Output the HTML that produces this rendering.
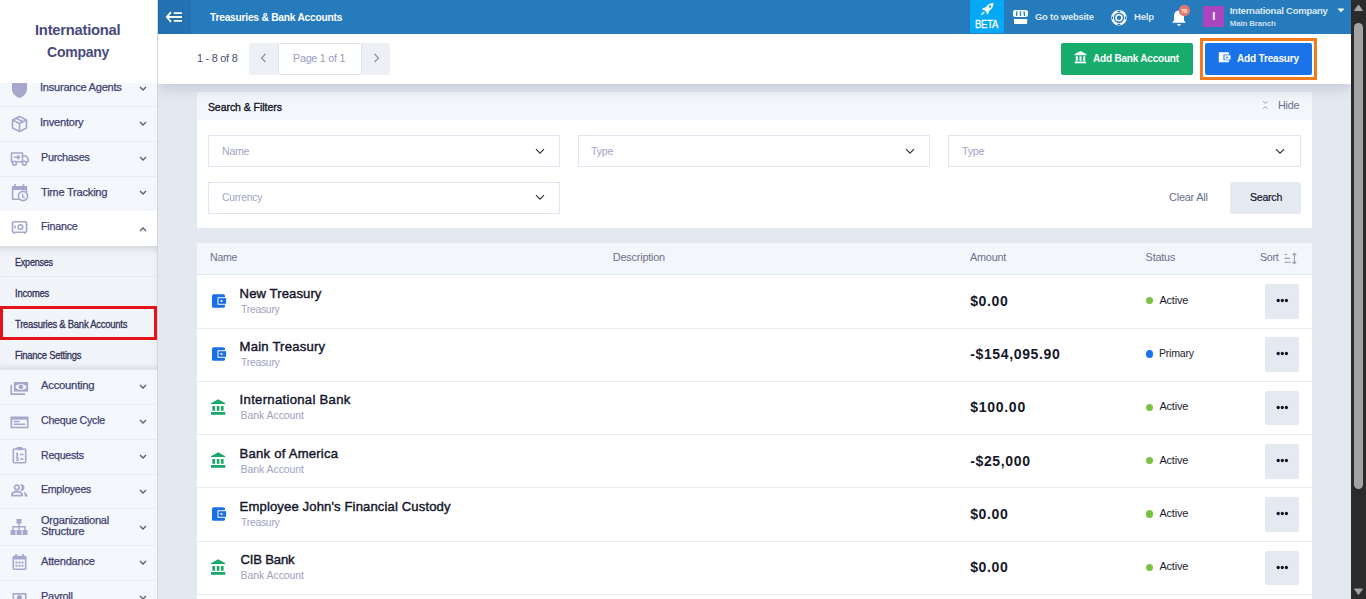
<!DOCTYPE html>
<html><head><meta charset="utf-8"><title>Treasuries &amp; Bank Accounts</title>
<style>
*{box-sizing:border-box;margin:0;padding:0}
html,body{width:1366px;height:599px;overflow:hidden;background:#e4e9f1;font-family:"Liberation Sans",sans-serif;position:relative}
.a{position:absolute}
.tx{position:absolute;white-space:pre;line-height:normal;z-index:5}
svg{position:absolute;overflow:visible}

</style></head><body>
<!-- ===== SIDEBAR ===== -->
<div class="a" style="left:0;top:0;width:157px;height:599px;background:#f4f7fb"></div>
<div class="a" style="left:157px;top:0;width:1px;height:599px;background:#d6d7db;z-index:3"></div>
<div class="a" style="left:0;top:106px;width:157px;height:1px;background:#e9ecf1"></div>
<div class="a" style="left:0;top:141px;width:157px;height:1px;background:#e9ecf1"></div>
<div class="a" style="left:0;top:176px;width:157px;height:1px;background:#e9ecf1"></div>
<div class="a" style="left:0;top:211px;width:157px;height:35px;background:#fff"></div>
<div class="a" style="left:0;top:246px;width:157px;height:123px;background:#f1f4f8;box-shadow:inset 0 9px 9px -7px rgba(0,0,20,.16), inset -5px 0 6px -5px rgba(0,0,20,.07), inset 0 -7px 7px -6px rgba(0,0,20,.12)"></div>
<div class="a" style="left:0;top:276px;width:157px;height:1px;background:#e6e9ef"></div>
<div class="a" style="left:0;top:369px;width:157px;height:1px;background:#e3e6ec"></div>
<div class="a" style="left:0;top:404px;width:157px;height:1px;background:#e9ecf1"></div>
<div class="a" style="left:0;top:439px;width:157px;height:1px;background:#e9ecf1"></div>
<div class="a" style="left:0;top:474px;width:157px;height:1px;background:#e9ecf1"></div>
<div class="a" style="left:0;top:508px;width:157px;height:1px;background:#e9ecf1"></div>
<div class="a" style="left:0;top:545px;width:157px;height:1px;background:#e9ecf1"></div>
<div class="a" style="left:0;top:580px;width:157px;height:1px;background:#e9ecf1"></div>
<!-- red highlight -->
<div class="a" style="left:0;top:306px;width:157px;height:34px;border:3px solid #e3121b;z-index:4"></div>

<!-- sidebar chevrons -->
<svg style="left:139px;top:86px" width="8" height="5" viewBox="0 0 8 5"><path d="M1 1 L4 4 L7 1" fill="none" stroke="#5b5c68" stroke-width="1.25"/></svg>
<svg style="left:139px;top:121px" width="8" height="5" viewBox="0 0 8 5"><path d="M1 1 L4 4 L7 1" fill="none" stroke="#5b5c68" stroke-width="1.25"/></svg>
<svg style="left:139px;top:156px" width="8" height="5" viewBox="0 0 8 5"><path d="M1 1 L4 4 L7 1" fill="none" stroke="#5b5c68" stroke-width="1.25"/></svg>
<svg style="left:139px;top:190px" width="8" height="5" viewBox="0 0 8 5"><path d="M1 1 L4 4 L7 1" fill="none" stroke="#5b5c68" stroke-width="1.25"/></svg>
<svg style="left:139px;top:227px" width="8" height="5" viewBox="0 0 8 5"><path d="M1 4 L4 1 L7 4" fill="none" stroke="#5b5c68" stroke-width="1.25"/></svg>
<svg style="left:139px;top:384px" width="8" height="5" viewBox="0 0 8 5"><path d="M1 1 L4 4 L7 1" fill="none" stroke="#5b5c68" stroke-width="1.25"/></svg>
<svg style="left:139px;top:419px" width="8" height="5" viewBox="0 0 8 5"><path d="M1 1 L4 4 L7 1" fill="none" stroke="#5b5c68" stroke-width="1.25"/></svg>
<svg style="left:139px;top:454px" width="8" height="5" viewBox="0 0 8 5"><path d="M1 1 L4 4 L7 1" fill="none" stroke="#5b5c68" stroke-width="1.25"/></svg>
<svg style="left:139px;top:489px" width="8" height="5" viewBox="0 0 8 5"><path d="M1 1 L4 4 L7 1" fill="none" stroke="#5b5c68" stroke-width="1.25"/></svg>
<svg style="left:139px;top:525px" width="8" height="5" viewBox="0 0 8 5"><path d="M1 1 L4 4 L7 1" fill="none" stroke="#5b5c68" stroke-width="1.25"/></svg>
<svg style="left:139px;top:560px" width="8" height="5" viewBox="0 0 8 5"><path d="M1 1 L4 4 L7 1" fill="none" stroke="#5b5c68" stroke-width="1.25"/></svg>
<svg style="left:139px;top:595px" width="8" height="5" viewBox="0 0 8 5"><path d="M1 1 L4 4 L7 1" fill="none" stroke="#5b5c68" stroke-width="1.25"/></svg>

<!-- sidebar icons -->
<!-- shield -->
<svg style="left:11px;top:76px" width="17" height="23" viewBox="0 0 17 23"><path d="M1 0 H16 V13 C16 18 12 20.5 8.5 22 C5 20.5 1 18 1 13 Z" fill="#a5a7cc"/></svg>
<!-- cube -->
<svg style="left:11px;top:115px" width="17" height="18" viewBox="0 0 17 18"><g fill="none" stroke="#a5a7cc" stroke-width="1.6" stroke-linejoin="round"><path d="M8.5 1.5 L15.5 5 V13 L8.5 16.5 L1.5 13 V5 Z"/><path d="M1.5 5 L8.5 8.5 L15.5 5 M8.5 8.5 V16.5"/><path d="M5 3.3 L12 6.8"/></g></svg>
<!-- truck -->
<svg style="left:10px;top:151px" width="20" height="16" viewBox="0 0 20 16"><g fill="none" stroke="#a5a7cc" stroke-width="1.6" stroke-linejoin="round"><path d="M1.5 2 H12.5 V10.8 H1.5 Z"/><path d="M12.5 5 H16 L18 7.5 V10.8 H12.5"/><circle cx="4.5" cy="12.2" r="1.9" fill="#f4f7fb"/><circle cx="14.3" cy="12.2" r="1.9" fill="#f4f7fb"/><path d="M4 6.3 H9.5 M7.5 4.3 L9.5 6.3 L7.5 8.3"/></g></svg>
<!-- calendar clock -->
<svg style="left:10px;top:183px" width="20" height="19" viewBox="0 0 20 19"><g fill="none" stroke="#a5a7cc" stroke-width="1.6"><path d="M2.6 3.8 H16.4 V9 M2.6 3.8 V16.2 H9"/><path d="M5 1 V4 M13.5 1 V4"/></g><rect x="2" y="3" width="15" height="4" fill="#a5a7cc"/><circle cx="13" cy="13" r="4.6" fill="#f4f7fb" stroke="#a5a7cc" stroke-width="1.7"/><path d="M12.6 10.8 V13.4 L14.6 15" fill="none" stroke="#a5a7cc" stroke-width="1.4"/></svg>
<!-- safe -->
<svg style="left:10px;top:220px" width="19" height="15" viewBox="0 0 19 15"><g fill="none" stroke="#a5a7cc" stroke-width="1.6"><rect x="2.5" y="1.8" width="14" height="10.5" rx="1"/><circle cx="10.5" cy="7" r="2.3"/><path d="M5 5.5 V8.5 M4 12.5 V14 M15 12.5 V14 M17 4.5 V5.5 M17 8.5 V9.5"/></g></svg>
<!-- accounting -->
<svg style="left:9px;top:381px" width="21" height="15" viewBox="0 0 21 15"><g fill="#a5a7cc"><path d="M1.4 3.8 H3 V12.3 H16.1 V13.9 H1.4 Z"/><rect x="4.9" y="1" width="14.2" height="9.6"/></g><ellipse cx="11.9" cy="6" rx="5.4" ry="3" fill="#f4f7fb"/><circle cx="11.9" cy="5.9" r="2.3" fill="#a5a7cc"/></svg>
<!-- cheque -->
<svg style="left:9px;top:414.7px" width="21" height="15" viewBox="0 0 21 15"><rect x="2.3" y="2.3" width="16.4" height="10.2" fill="none" stroke="#a5a7cc" stroke-width="1.6"/><rect x="2" y="2" width="17" height="2.6" fill="#a5a7cc"/><path d="M5.3 6.6 H10 M5.3 9.2 H15.8" stroke="#a5a7cc" stroke-width="1.5" stroke-linecap="round"/></svg>
<!-- clipboard -->
<svg style="left:11px;top:446px" width="17" height="18" viewBox="0 0 17 18"><rect x="2.3" y="3" width="12.4" height="13.8" rx="1" fill="none" stroke="#a5a7cc" stroke-width="1.6"/><rect x="5.5" y="1" width="6" height="3.2" rx="1" fill="#a5a7cc"/><path d="M5 7.5 H6.5 V10 M5 10 H7 M5 12 H7 V14.3 H5 M9 8.5 H12.5 M9 13 H12.5" fill="none" stroke="#a5a7cc" stroke-width="1.3"/></svg>
<!-- employees -->
<svg style="left:10px;top:483px" width="19" height="15" viewBox="0 0 19 15"><circle cx="6.8" cy="4.4" r="2.3" fill="none" stroke="#a5a7cc" stroke-width="1.7"/><path d="M1.8 12.6 C1.8 9.6 4.3 8.6 6.8 8.6 C9.3 8.6 12.3 9.6 12.3 12.6 Z" fill="none" stroke="#a5a7cc" stroke-width="1.7" stroke-linejoin="round"/><path d="M11.2 1.9 A2.6 2.6 0 0 1 11.2 7.1 A4 4 0 0 0 11.2 1.9 Z" fill="#a5a7cc" stroke="#a5a7cc" stroke-width="1.2"/><path d="M13.6 8.9 C16 9.4 17.6 10.6 17.6 13.4 H14.8 C14.8 11.4 14.4 10 13.6 8.9 Z" fill="#a5a7cc"/></svg>
<!-- org -->
<svg style="left:9px;top:518px" width="21" height="18" viewBox="0 0 21 18"><g fill="#a5a7cc"><rect x="7.5" y="1" width="5" height="4.5"/><rect x="1.5" y="12" width="5" height="5"/><rect x="7.5" y="12" width="5" height="5"/><rect x="13.5" y="12" width="5" height="5"/><path d="M9.3 5 H10.7 V8 H16.7 V12 H15.3 V9.4 H10.7 V12 H9.3 V9.4 H4.7 V12 H3.3 V8 H9.3 Z"/></g></svg>
<!-- attendance -->
<svg style="left:11px;top:553px" width="17" height="18" viewBox="0 0 17 18"><rect x="2.3" y="3.5" width="12.4" height="12.8" rx="1" fill="none" stroke="#a5a7cc" stroke-width="1.6"/><rect x="2" y="3" width="13" height="3.5" fill="#a5a7cc"/><path d="M5 1 V4 M12 1 V4" stroke="#a5a7cc" stroke-width="1.6"/><g fill="#a5a7cc"><rect x="4.5" y="8.5" width="2" height="2"/><rect x="7.5" y="8.5" width="2" height="2"/><rect x="10.5" y="8.5" width="2" height="2"/><rect x="4.5" y="11.8" width="2" height="2"/><rect x="7.5" y="11.8" width="2" height="2"/><rect x="10.5" y="11.8" width="2" height="2"/></g></svg>
<!-- payroll -->
<svg style="left:11px;top:592px" width="17" height="10" viewBox="0 0 17 10"><rect x="2.3" y="1.8" width="12.4" height="9" fill="none" stroke="#a5a7cc" stroke-width="1.6"/><circle cx="8.5" cy="5.5" r="2.6" fill="#a5a7cc"/></svg>

<!-- ===== TOP BAR ===== -->
<div class="a" style="left:158px;top:0;width:1193px;height:34px;background:#257bbc"></div>
<div class="a" style="left:158px;top:0;width:33px;height:34px;background:#2371b1"></div>
<svg style="left:165px;top:11px" width="18" height="12" viewBox="0 0 18 12"><g fill="none" stroke="#fff" stroke-width="1.8"><path d="M6 1.2 L1.8 6 L6 10.8"/><path d="M2 6 H17 M8.8 2.2 H17 M8.8 9.8 H17"/></g></svg>
<div class="a" style="left:970px;top:0;width:34px;height:33px;background:#03a9f4"></div>
<!-- rocket -->
<svg style="left:980px;top:2px" width="15" height="14" viewBox="0 0 15 14"><g fill="#fff"><path d="M13.5 1 C10 1 7.5 2.5 5.5 5.5 L3.5 5.8 L1.8 7.6 L4.3 8 L6.5 10.2 L6.9 12.7 L8.7 11 L9 9 C12 7 13.5 4.5 13.5 1 Z"/><circle cx="10" cy="4.5" r="1.2" fill="#03a9f4"/><path d="M3.3 9.3 L1.2 11.8 L1 13 L2.3 12.9 L5 10.8 Z" opacity=".75"/></g></svg>
<!-- store -->
<svg style="left:1012px;top:9px" width="17" height="16" viewBox="0 0 17 16"><rect x="1" y="1" width="15" height="7" rx="2.2" fill="#fff"/><path d="M5 2.2 L4.5 7 M8.5 2.2 V7 M12 2.2 L12.5 7" stroke="#257bbc" stroke-width="1.3"/><rect x="2" y="10" width="13.2" height="5" fill="#fff"/></svg>
<!-- help ring -->
<svg style="left:1110px;top:9px" width="18" height="18" viewBox="0 0 18 18"><circle cx="9" cy="8.8" r="6.5" fill="none" stroke="#fff" stroke-width="2.6"/><circle cx="9" cy="8.8" r="3" fill="none" stroke="#fff" stroke-width="1.6"/><g stroke="#257bbc" stroke-width="1.3"><path d="M7.6 2.3 H10.4 M7.6 15.3 H10.4 M2.5 7.4 V10.2 M15.5 7.4 V10.2"/></g></svg>
<!-- bell -->
<svg style="left:1170px;top:9px" width="18" height="18" viewBox="0 0 18 18"><path d="M9 1.5 C5.5 1.5 4 4 4 7.5 V11.5 L2 13.8 H16 L14 11.5 V7.5 C14 4 12.5 1.5 9 1.5 Z" fill="#fff"/><path d="M7.2 15 H10.8 C10.6 16.2 9.9 16.8 9 16.8 C8.1 16.8 7.4 16.2 7.2 15 Z" fill="#fff"/></svg>
<svg style="left:1178px;top:4px" width="13" height="13" viewBox="0 0 13 13"><circle cx="6.4" cy="6.5" r="5.7" fill="#df7674"/></svg>
<div class="a" style="left:1203px;top:6px;width:21px;height:21px;background:#ab45bd"></div>
<svg style="left:1337px;top:8px" width="8" height="5" viewBox="0 0 8 5"><path d="M0.5 0.5 H7.5 L4 4.3 Z" fill="#fff"/></svg>

<!-- ===== TOOLBAR ===== -->
<div class="a" style="left:158px;top:34px;width:1193px;height:50px;background:#fff;box-shadow:0 5px 14px rgba(40,50,90,.17);clip-path:inset(0 0 -40px 0);z-index:1"></div>
<div class="a" style="left:249px;top:43px;width:141px;height:32px;background:#edf0f5;border-radius:3px;z-index:2"></div>
<div class="a" style="left:278px;top:43px;width:84px;height:32px;background:#fff;border:1px solid #e1e5ee;z-index:2"></div>
<svg style="left:259px;top:53px;z-index:2" width="9" height="10" viewBox="0 0 9 10"><path d="M6.5 1 L2.5 5 L6.5 9" fill="none" stroke="#8f92a8" stroke-width="1.3"/></svg>
<svg style="left:372px;top:53px;z-index:2" width="9" height="10" viewBox="0 0 9 10"><path d="M2.5 1 L6.5 5 L2.5 9" fill="none" stroke="#8f92a8" stroke-width="1.3"/></svg>
<div class="a" style="left:1061px;top:43px;width:132px;height:32px;background:#17ac6c;border-radius:2px;z-index:2"></div>
<svg style="left:1074px;top:50px;z-index:2" width="13" height="14" viewBox="0 0 13 14"><g fill="#fff"><path d="M6.5 1 L12.5 4.2 V5.3 H0.5 V4.2 Z"/><rect x="1.8" y="6.3" width="2" height="4.5"/><rect x="5.5" y="6.3" width="2" height="4.5"/><rect x="9.2" y="6.3" width="2" height="4.5"/><rect x="0.8" y="11.5" width="11.4" height="1.8"/></g></svg>
<div class="a" style="left:1200px;top:38px;width:117px;height:42px;border:3px solid #f47a1f;z-index:2"></div>
<div class="a" style="left:1205px;top:43px;width:107px;height:32px;background:#1a73e8;border-radius:2px;z-index:2"></div>
<svg style="left:1218px;top:52px;z-index:2" width="13" height="11" viewBox="0 0 13 11"><path d="M1.2 0.3 H10.5 Q11 0.3 11 0.8 V2.5 H5.5 V8.3 H11 V9.7 Q11 10.2 10.5 10.2 H1.2 Q0.8 10.2 0.8 9.7 V0.8 Q0.8 0.3 1.2 0.3 Z" fill="#fff"/><rect x="6.5" y="3.3" width="6" height="4.3" fill="#fff"/><circle cx="9" cy="5.45" r="0.9" fill="#1a73e8"/></svg>

<!-- ===== FILTER PANEL ===== -->
<div class="a" style="left:197px;top:92px;width:1115px;height:136px;background:#fff"></div>
<div class="a" style="left:197px;top:92px;width:1115px;height:28px;background:#f3f6fa"></div>
<svg style="left:1261px;top:100px" width="9" height="10" viewBox="0 0 9 10"><path d="M2.2 1.2 L4.4 3.5 L6.6 1.2 M2.2 8.8 L4.4 6.5 L6.6 8.8" fill="none" stroke="#9c9eba" stroke-width="1"/></svg>
<div class="a" style="left:208px;top:135px;width:352px;height:32px;border:1px solid #e0e6ef"></div>
<div class="a" style="left:578px;top:135px;width:352px;height:32px;border:1px solid #e0e6ef"></div>
<div class="a" style="left:948px;top:135px;width:353px;height:32px;border:1px solid #e0e6ef"></div>
<div class="a" style="left:208px;top:182px;width:352px;height:32px;border:1px solid #e0e6ef"></div>
<svg style="left:535px;top:148px" width="10" height="7" viewBox="0 0 10 7"><path d="M1 1.2 L5 5.2 L9 1.2" fill="none" stroke="#2f3140" stroke-width="1.15"/></svg>
<svg style="left:905px;top:148px" width="10" height="7" viewBox="0 0 10 7"><path d="M1 1.2 L5 5.2 L9 1.2" fill="none" stroke="#2f3140" stroke-width="1.15"/></svg>
<svg style="left:1275px;top:148px" width="10" height="7" viewBox="0 0 10 7"><path d="M1 1.2 L5 5.2 L9 1.2" fill="none" stroke="#2f3140" stroke-width="1.15"/></svg>
<svg style="left:535px;top:194px" width="10" height="7" viewBox="0 0 10 7"><path d="M1 1.2 L5 5.2 L9 1.2" fill="none" stroke="#2f3140" stroke-width="1.15"/></svg>
<div class="a" style="left:1230px;top:182px;width:71px;height:32px;background:#e4e9f2;border-radius:2px"></div>

<!-- ===== TABLE ===== -->
<div class="a" style="left:197px;top:243px;width:1115px;height:356px;background:#fff"></div>
<div class="a" style="left:197px;top:243px;width:1115px;height:31px;background:#f3f6fa"></div>
<div class="a" style="left:197px;top:274px;width:1115px;height:1px;background:#e2e7ef"></div>
<div class="a" style="left:197px;top:328px;width:1115px;height:1px;background:#e6ebf2"></div>
<div class="a" style="left:197px;top:381px;width:1115px;height:1px;background:#e6ebf2"></div>
<div class="a" style="left:197px;top:434px;width:1115px;height:1px;background:#e6ebf2"></div>
<div class="a" style="left:197px;top:487px;width:1115px;height:1px;background:#e6ebf2"></div>
<div class="a" style="left:197px;top:541px;width:1115px;height:1px;background:#e6ebf2"></div>
<div class="a" style="left:197px;top:594px;width:1115px;height:1px;background:#e6ebf2"></div>
<svg style="left:1284px;top:252px" width="13" height="13" viewBox="0 0 13 13"><g fill="none" stroke="#9a9cb5" stroke-width="1.1"><path d="M0.5 2.5 H3.2 M0.5 6.4 H6 M0.5 10.3 H6.8"/><path d="M10.4 1.5 V11.5 M8.6 3.2 L10.4 1.4 L12.2 3.2 M8.6 9.8 L10.4 11.6 L12.2 9.8"/></g></svg>
<svg style="left:211px;top:294.00px" width="16" height="15" viewBox="0 0 16 15"><path d="M2.6 0.2 H12.4 Q14 0.2 14 1.8 V3.2 H6.5 V10.8 H14 V12.2 Q14 13.8 12.4 13.8 H2.6 Q1 13.8 1 12.2 V1.8 Q1 0.2 2.6 0.2 Z" fill="#1a6fe8"/><rect x="7.5" y="4.2" width="7.6" height="5.6" fill="#1a6fe8"/><circle cx="10.5" cy="7" r="1.1" fill="#fff"/></svg>
<div class="a" style="left:1146px;top:297.00px;width:7.2px;height:7.2px;border-radius:50%;background:#7bc142"></div>
<div class="a" style="left:1265px;top:284.00px;width:34px;height:34.6px;background:#e4e9f2;border-radius:2px"></div>
<svg style="left:1276px;top:298.00px" width="13" height="5" viewBox="0 0 13 5"><g fill="#15162a"><circle cx="2.2" cy="2.5" r="1.65"/><circle cx="6.3" cy="2.5" r="1.65"/><circle cx="10.4" cy="2.5" r="1.65"/></g></svg>
<svg style="left:211px;top:347.33px" width="16" height="15" viewBox="0 0 16 15"><path d="M2.6 0.2 H12.4 Q14 0.2 14 1.8 V3.2 H6.5 V10.8 H14 V12.2 Q14 13.8 12.4 13.8 H2.6 Q1 13.8 1 12.2 V1.8 Q1 0.2 2.6 0.2 Z" fill="#1a6fe8"/><rect x="7.5" y="4.2" width="7.6" height="5.6" fill="#1a6fe8"/><circle cx="10.5" cy="7" r="1.1" fill="#fff"/></svg>
<div class="a" style="left:1146px;top:350.33px;width:7.2px;height:7.2px;border-radius:50%;background:#1a73e8"></div>
<div class="a" style="left:1265px;top:337.33px;width:34px;height:34.6px;background:#e4e9f2;border-radius:2px"></div>
<svg style="left:1276px;top:351.33px" width="13" height="5" viewBox="0 0 13 5"><g fill="#15162a"><circle cx="2.2" cy="2.5" r="1.65"/><circle cx="6.3" cy="2.5" r="1.65"/><circle cx="10.4" cy="2.5" r="1.65"/></g></svg>
<svg style="left:210px;top:398.96px" width="16" height="17" viewBox="0 0 16 17"><g fill="#19aa6a"><path d="M8.2 0.2 L15.3 4.2 V5 H1 V4.2 Z"/><rect x="2.4" y="7" width="2.6" height="4.8"/><rect x="6.8" y="7" width="2.6" height="4.8"/><rect x="11" y="7" width="2.6" height="4.8"/><rect x="1" y="13" width="14.3" height="2.8"/></g></svg>
<div class="a" style="left:1146px;top:403.66px;width:7.2px;height:7.2px;border-radius:50%;background:#7bc142"></div>
<div class="a" style="left:1265px;top:390.66px;width:34px;height:34.6px;background:#e4e9f2;border-radius:2px"></div>
<svg style="left:1276px;top:404.66px" width="13" height="5" viewBox="0 0 13 5"><g fill="#15162a"><circle cx="2.2" cy="2.5" r="1.65"/><circle cx="6.3" cy="2.5" r="1.65"/><circle cx="10.4" cy="2.5" r="1.65"/></g></svg>
<svg style="left:210px;top:452.29px" width="16" height="17" viewBox="0 0 16 17"><g fill="#19aa6a"><path d="M8.2 0.2 L15.3 4.2 V5 H1 V4.2 Z"/><rect x="2.4" y="7" width="2.6" height="4.8"/><rect x="6.8" y="7" width="2.6" height="4.8"/><rect x="11" y="7" width="2.6" height="4.8"/><rect x="1" y="13" width="14.3" height="2.8"/></g></svg>
<div class="a" style="left:1146px;top:456.99px;width:7.2px;height:7.2px;border-radius:50%;background:#7bc142"></div>
<div class="a" style="left:1265px;top:443.99px;width:34px;height:34.6px;background:#e4e9f2;border-radius:2px"></div>
<svg style="left:1276px;top:457.99px" width="13" height="5" viewBox="0 0 13 5"><g fill="#15162a"><circle cx="2.2" cy="2.5" r="1.65"/><circle cx="6.3" cy="2.5" r="1.65"/><circle cx="10.4" cy="2.5" r="1.65"/></g></svg>
<svg style="left:211px;top:507.32px" width="16" height="15" viewBox="0 0 16 15"><path d="M2.6 0.2 H12.4 Q14 0.2 14 1.8 V3.2 H6.5 V10.8 H14 V12.2 Q14 13.8 12.4 13.8 H2.6 Q1 13.8 1 12.2 V1.8 Q1 0.2 2.6 0.2 Z" fill="#1a6fe8"/><rect x="7.5" y="4.2" width="7.6" height="5.6" fill="#1a6fe8"/><circle cx="10.5" cy="7" r="1.1" fill="#fff"/></svg>
<div class="a" style="left:1146px;top:510.32px;width:7.2px;height:7.2px;border-radius:50%;background:#7bc142"></div>
<div class="a" style="left:1265px;top:497.32px;width:34px;height:34.6px;background:#e4e9f2;border-radius:2px"></div>
<svg style="left:1276px;top:511.32px" width="13" height="5" viewBox="0 0 13 5"><g fill="#15162a"><circle cx="2.2" cy="2.5" r="1.65"/><circle cx="6.3" cy="2.5" r="1.65"/><circle cx="10.4" cy="2.5" r="1.65"/></g></svg>
<svg style="left:210px;top:558.95px" width="16" height="17" viewBox="0 0 16 17"><g fill="#19aa6a"><path d="M8.2 0.2 L15.3 4.2 V5 H1 V4.2 Z"/><rect x="2.4" y="7" width="2.6" height="4.8"/><rect x="6.8" y="7" width="2.6" height="4.8"/><rect x="11" y="7" width="2.6" height="4.8"/><rect x="1" y="13" width="14.3" height="2.8"/></g></svg>
<div class="a" style="left:1146px;top:563.65px;width:7.2px;height:7.2px;border-radius:50%;background:#7bc142"></div>
<div class="a" style="left:1265px;top:550.65px;width:34px;height:34.6px;background:#e4e9f2;border-radius:2px"></div>
<svg style="left:1276px;top:564.65px" width="13" height="5" viewBox="0 0 13 5"><g fill="#15162a"><circle cx="2.2" cy="2.5" r="1.65"/><circle cx="6.3" cy="2.5" r="1.65"/><circle cx="10.4" cy="2.5" r="1.65"/></g></svg>
<svg style="left:210px;top:612.28px" width="16" height="17" viewBox="0 0 16 17"><g fill="#19aa6a"><path d="M8.2 0.2 L15.3 4.2 V5 H1 V4.2 Z"/><rect x="2.4" y="7" width="2.6" height="4.8"/><rect x="6.8" y="7" width="2.6" height="4.8"/><rect x="11" y="7" width="2.6" height="4.8"/><rect x="1" y="13" width="14.3" height="2.8"/></g></svg>
<div class="a" style="left:1146px;top:616.98px;width:7.2px;height:7.2px;border-radius:50%;background:#7bc142"></div>
<div class="a" style="left:1265px;top:603.98px;width:34px;height:34.6px;background:#e4e9f2;border-radius:2px"></div>
<svg style="left:1276px;top:617.98px" width="13" height="5" viewBox="0 0 13 5"><g fill="#15162a"><circle cx="2.2" cy="2.5" r="1.65"/><circle cx="6.3" cy="2.5" r="1.65"/><circle cx="10.4" cy="2.5" r="1.65"/></g></svg>

<!-- ===== SCROLLBAR ===== -->
<div class="a" style="left:1351px;top:0;width:15px;height:599px;background:#2b2b2b;z-index:8"></div>
<svg style="left:1351px;top:0;z-index:9" width="15" height="15" viewBox="0 0 15 15"><path d="M3.5 10.5 L7.5 5 L11.5 10.5 Z" fill="#a3a3a3" stroke="#a3a3a3" stroke-width="1" stroke-linejoin="round"/></svg>
<div class="a" style="left:1354px;top:23px;width:9px;height:466px;background:#a3a3a3;border-radius:4.5px;z-index:9"></div>
<svg style="left:1351px;top:584px;z-index:9" width="15" height="15" viewBox="0 0 15 15"><path d="M3.5 5 L7.5 10.5 L11.5 5 Z" fill="#a3a3a3" stroke="#a3a3a3" stroke-width="1" stroke-linejoin="round"/></svg>

<div id="texts">
<span class="tx" style="left:35.20px;top:20.80px;font-size:15px;color:#484b7c;font-weight:bold;letter-spacing:-0.250px;transform:scaleX(0.9844);transform-origin:1.00px 0;z-index:7">International</span>
<span class="tx" style="left:47.00px;top:42.90px;font-size:15px;color:#484b7c;font-weight:bold;letter-spacing:-0.250px;transform:scaleX(0.9333);transform-origin:0.00px 0;z-index:7">Company</span>
<span class="tx" style="left:39.80px;top:81.20px;font-size:11.3px;color:#3f4270;letter-spacing:-0.250px;transform:scaleX(0.9794);transform-origin:1.00px 0;-webkit-text-stroke:0.25px #3f4270">Insurance Agents</span>
<span class="tx" style="left:39.80px;top:116.30px;font-size:11.3px;color:#3f4270;letter-spacing:-0.250px;transform:scaleX(0.9813);transform-origin:1.00px 0;-webkit-text-stroke:0.25px #3f4270">Inventory</span>
<span class="tx" style="left:40.80px;top:151.00px;font-size:11.3px;color:#3f4270;letter-spacing:-0.250px;transform:scaleX(0.9493);transform-origin:0.00px 0;-webkit-text-stroke:0.25px #3f4270">Purchases</span>
<span class="tx" style="left:40.80px;top:185.80px;font-size:11.3px;color:#3f4270;letter-spacing:-0.250px;transform:scaleX(0.9846);transform-origin:0.00px 0;-webkit-text-stroke:0.25px #3f4270">Time Tracking</span>
<span class="tx" style="left:40.80px;top:220.00px;font-size:11.3px;color:#3f4270;letter-spacing:-0.250px;transform:scaleX(0.9503);transform-origin:0.00px 0;-webkit-text-stroke:0.25px #3f4270">Finance</span>
<span class="tx" style="left:40.80px;top:379.30px;font-size:11.3px;color:#3f4270;letter-spacing:-0.250px;transform:scaleX(0.9988);transform-origin:0.00px 0;-webkit-text-stroke:0.25px #3f4270">Accounting</span>
<span class="tx" style="left:40.80px;top:414.10px;font-size:11.3px;color:#3f4270;letter-spacing:-0.250px;transform:scaleX(0.9407);transform-origin:0.00px 0;-webkit-text-stroke:0.25px #3f4270">Cheque Cycle</span>
<span class="tx" style="left:40.80px;top:449.00px;font-size:11.3px;color:#3f4270;letter-spacing:-0.250px;transform:scaleX(0.9368);transform-origin:0.00px 0;-webkit-text-stroke:0.25px #3f4270">Requests</span>
<span class="tx" style="left:40.80px;top:483.20px;font-size:11.3px;color:#3f4270;letter-spacing:-0.250px;transform:scaleX(0.9348);transform-origin:0.00px 0;-webkit-text-stroke:0.25px #3f4270">Employees</span>
<span class="tx" style="left:40.80px;top:514.00px;font-size:11.3px;color:#3f4270;letter-spacing:-0.250px;transform:scaleX(0.9799);transform-origin:0.00px 0;-webkit-text-stroke:0.25px #3f4270">Organizational</span>
<span class="tx" style="left:40.80px;top:525.00px;font-size:11.3px;color:#3f4270;letter-spacing:-0.250px;transform:scaleX(0.9920);transform-origin:0.00px 0;-webkit-text-stroke:0.25px #3f4270">Structure</span>
<span class="tx" style="left:40.80px;top:555.30px;font-size:11.3px;color:#3f4270;letter-spacing:-0.250px;transform:scaleX(0.9812);transform-origin:0.00px 0;-webkit-text-stroke:0.25px #3f4270">Attendance</span>
<span class="tx" style="left:40.80px;top:590.00px;font-size:11.3px;color:#3f4270;letter-spacing:-0.250px;transform:scaleX(0.9686);transform-origin:0.00px 0;-webkit-text-stroke:0.25px #3f4270">Payroll</span>
<span class="tx" style="left:15.20px;top:257.00px;font-size:10.2px;color:#31335a;letter-spacing:-0.250px;transform:scaleX(0.8859);transform-origin:0.00px 0;-webkit-text-stroke:0.3px #31335a">Expenses</span>
<span class="tx" style="left:15.20px;top:287.60px;font-size:10.2px;color:#31335a;letter-spacing:-0.250px;transform:scaleX(0.9266);transform-origin:0.00px 0;-webkit-text-stroke:0.3px #31335a">Incomes</span>
<span class="tx" style="left:15.20px;top:318.80px;font-size:10.2px;color:#31335a;letter-spacing:-0.250px;transform:scaleX(0.9269);transform-origin:0.00px 0;-webkit-text-stroke:0.3px #31335a">Treasuries &amp; Bank Accounts</span>
<span class="tx" style="left:15.20px;top:349.70px;font-size:10.2px;color:#31335a;letter-spacing:-0.250px;transform:scaleX(0.9217);transform-origin:0.00px 0;-webkit-text-stroke:0.3px #31335a">Finance Settings</span>
<span class="tx" style="left:210.00px;top:10.90px;font-size:11.2px;color:#ffffff;font-weight:bold;letter-spacing:-0.250px;transform:scaleX(0.9123);transform-origin:0.00px 0">Treasuries &amp; Bank Accounts</span>
<span class="tx" style="left:1035.30px;top:10.70px;font-size:9.8px;color:#dce8f3;font-weight:bold;letter-spacing:-0.250px;transform:scaleX(0.9631);transform-origin:0.00px 0">Go to website</span>
<span class="tx" style="left:1133.80px;top:11.00px;font-size:9.8px;color:#dce8f3;font-weight:bold;letter-spacing:-0.250px;transform:scaleX(0.9758);transform-origin:0.00px 0">Help</span>
<span class="tx" style="left:1229.70px;top:4.80px;font-size:9.5px;color:#dce8f3;font-weight:bold;letter-spacing:-0.237px">International Company</span>
<span class="tx" style="left:1229.70px;top:18.80px;font-size:8.0px;color:#c9dbee;font-weight:bold;letter-spacing:-0.192px">Main Branch</span>
<span class="tx" style="left:975.40px;top:18.60px;font-size:10px;color:#ffffff;letter-spacing:-0.250px;transform:scaleX(0.9457);transform-origin:0.00px 0;-webkit-text-stroke:0.3px #ffffff">BETA</span>
<span class="tx" style="left:1181.20px;top:7.40px;font-size:6.2px;color:#fff6d8;font-weight:bold;letter-spacing:-0.250px;transform:scaleX(0.9456);transform-origin:0.00px 0">78</span>
<span class="tx" style="left:1212.30px;top:9.90px;font-size:11px;color:#ffffff;font-weight:bold">I</span>
<span class="tx" style="left:196.70px;top:52.40px;font-size:11.5px;color:#4a4d78;letter-spacing:-0.250px;transform:scaleX(0.9429);transform-origin:0.00px 0">1 - 8 of 8</span>
<span class="tx" style="left:293.20px;top:52.40px;font-size:11.5px;color:#9a9cbf;letter-spacing:-0.250px;transform:scaleX(0.9315);transform-origin:0.00px 0">Page 1 of 1</span>
<span class="tx" style="left:1093.30px;top:52.30px;font-size:11.5px;color:#ffffff;font-weight:bold;letter-spacing:-0.250px;transform:scaleX(0.8722);transform-origin:0.00px 0">Add Bank Account</span>
<span class="tx" style="left:1236.60px;top:52.30px;font-size:11.5px;color:#ffffff;font-weight:bold;letter-spacing:-0.250px;transform:scaleX(0.8773);transform-origin:0.00px 0">Add Treasury</span>
<span class="tx" style="left:207.90px;top:100.50px;font-size:10.5px;color:#16172b;letter-spacing:-0.043px;-webkit-text-stroke:0.35px #16172b">Search &amp; Filters</span>
<span class="tx" style="left:1277.90px;top:99.20px;font-size:11.2px;color:#6b6d8e;letter-spacing:-0.250px;transform:scaleX(0.9666);transform-origin:0.00px 0">Hide</span>
<span class="tx" style="left:221.50px;top:145.00px;font-size:10.8px;color:#a2a4c6;letter-spacing:-0.250px;transform:scaleX(0.9805);transform-origin:0.00px 0">Name</span>
<span class="tx" style="left:591.30px;top:145.00px;font-size:10.8px;color:#a2a4c6;letter-spacing:-0.250px;transform:scaleX(0.9977);transform-origin:0.00px 0">Type</span>
<span class="tx" style="left:961.80px;top:145.00px;font-size:10.8px;color:#a2a4c6;letter-spacing:-0.250px;transform:scaleX(0.9977);transform-origin:0.00px 0">Type</span>
<span class="tx" style="left:221.50px;top:191.00px;font-size:10.8px;color:#a2a4c6;letter-spacing:-0.250px;transform:scaleX(0.9590);transform-origin:0.00px 0">Currency</span>
<span class="tx" style="left:1169.00px;top:191.00px;font-size:11.5px;color:#6a6d91;letter-spacing:-0.250px;transform:scaleX(0.9535);transform-origin:0.00px 0">Clear All</span>
<span class="tx" style="left:1249.70px;top:191.00px;font-size:11.5px;color:#16172b;letter-spacing:-0.250px;transform:scaleX(0.9169);transform-origin:0.00px 0;-webkit-text-stroke:0.22px #16172b">Search</span>
<span class="tx" style="left:209.80px;top:250.90px;font-size:10.9px;color:#6f7090;letter-spacing:-0.250px;transform:scaleX(0.9701);transform-origin:0.00px 0">Name</span>
<span class="tx" style="left:612.80px;top:250.90px;font-size:10.9px;color:#6f7090;letter-spacing:-0.212px">Description</span>
<span class="tx" style="left:970.00px;top:250.90px;font-size:10.9px;color:#6f7090;letter-spacing:-0.241px">Amount</span>
<span class="tx" style="left:1145.60px;top:250.90px;font-size:10.9px;color:#6f7090;letter-spacing:-0.226px">Status</span>
<span class="tx" style="left:1260.20px;top:250.90px;font-size:10.9px;color:#6f7090;letter-spacing:-0.250px;transform:scaleX(0.9793);transform-origin:0.00px 0">Sort</span>
<span class="tx" style="left:239.60px;top:285.60px;font-size:13.1px;color:#14152a;letter-spacing:0.095px;-webkit-text-stroke:0.4px #14152a">New Treasury</span>
<span class="tx" style="left:240.60px;top:302.80px;font-size:10.5px;color:#9ea1bf;letter-spacing:-0.250px;transform:scaleX(0.9866);transform-origin:0.00px 0">Treasury</span>
<span class="tx" style="left:970.20px;top:292.70px;font-size:14px;color:#15162a;font-weight:bold;letter-spacing:0.638px">$0.00</span>
<span class="tx" style="left:1159.40px;top:293.80px;font-size:11px;color:#1b1c2e;letter-spacing:-0.207px">Active</span>
<span class="tx" style="left:239.60px;top:338.93px;font-size:13.1px;color:#14152a;letter-spacing:0.205px;-webkit-text-stroke:0.4px #14152a">Main Treasury</span>
<span class="tx" style="left:240.60px;top:356.13px;font-size:10.5px;color:#9ea1bf;letter-spacing:-0.250px;transform:scaleX(0.9866);transform-origin:0.00px 0">Treasury</span>
<span class="tx" style="left:970.20px;top:346.03px;font-size:14px;color:#15162a;font-weight:bold;letter-spacing:0.643px">-$154,095.90</span>
<span class="tx" style="left:1159.40px;top:347.13px;font-size:11px;color:#1b1c2e;letter-spacing:-0.250px;transform:scaleX(0.9624);transform-origin:0.00px 0">Primary</span>
<span class="tx" style="left:239.60px;top:392.26px;font-size:13.1px;color:#14152a;letter-spacing:0.306px;-webkit-text-stroke:0.4px #14152a">International Bank</span>
<span class="tx" style="left:240.60px;top:409.46px;font-size:10.5px;color:#9ea1bf;letter-spacing:-0.070px">Bank Account</span>
<span class="tx" style="left:970.20px;top:399.36px;font-size:14px;color:#15162a;font-weight:bold;letter-spacing:0.730px">$100.00</span>
<span class="tx" style="left:1159.40px;top:400.46px;font-size:11px;color:#1b1c2e;letter-spacing:-0.207px">Active</span>
<span class="tx" style="left:239.60px;top:445.59px;font-size:13.1px;color:#14152a;letter-spacing:0.223px;-webkit-text-stroke:0.4px #14152a">Bank of America</span>
<span class="tx" style="left:240.60px;top:462.79px;font-size:10.5px;color:#9ea1bf;letter-spacing:-0.070px">Bank Account</span>
<span class="tx" style="left:970.20px;top:452.69px;font-size:14px;color:#15162a;font-weight:bold;letter-spacing:0.645px">-$25,000</span>
<span class="tx" style="left:1159.40px;top:453.79px;font-size:11px;color:#1b1c2e;letter-spacing:-0.207px">Active</span>
<span class="tx" style="left:239.60px;top:498.92px;font-size:13.1px;color:#14152a;letter-spacing:0.123px;-webkit-text-stroke:0.4px #14152a">Employee John&#39;s Financial Custody</span>
<span class="tx" style="left:240.60px;top:516.12px;font-size:10.5px;color:#9ea1bf;letter-spacing:-0.250px;transform:scaleX(0.9866);transform-origin:0.00px 0">Treasury</span>
<span class="tx" style="left:970.20px;top:506.02px;font-size:14px;color:#15162a;font-weight:bold;letter-spacing:0.638px">$0.00</span>
<span class="tx" style="left:1159.40px;top:507.12px;font-size:11px;color:#1b1c2e;letter-spacing:-0.207px">Active</span>
<span class="tx" style="left:240.60px;top:552.25px;font-size:13.1px;color:#14152a;letter-spacing:-0.195px;-webkit-text-stroke:0.4px #14152a">CIB Bank</span>
<span class="tx" style="left:240.60px;top:569.45px;font-size:10.5px;color:#9ea1bf;letter-spacing:-0.070px">Bank Account</span>
<span class="tx" style="left:970.20px;top:559.35px;font-size:14px;color:#15162a;font-weight:bold;letter-spacing:0.638px">$0.00</span>
<span class="tx" style="left:1159.40px;top:560.45px;font-size:11px;color:#1b1c2e;letter-spacing:-0.207px">Active</span>
<span class="tx" style="left:240.60px;top:605.58px;font-size:13.1px;color:#14152a;letter-spacing:-0.250px;transform:scaleX(0.9968);transform-origin:0.00px 0;-webkit-text-stroke:0.4px #14152a">Gold Bank</span>
<span class="tx" style="left:240.60px;top:622.78px;font-size:10.5px;color:#9ea1bf;letter-spacing:-0.070px">Bank Account</span>
<span class="tx" style="left:970.20px;top:612.68px;font-size:14px;color:#15162a;font-weight:bold;letter-spacing:0.638px">$0.00</span>
<span class="tx" style="left:1159.40px;top:613.78px;font-size:11px;color:#1b1c2e;letter-spacing:-0.207px">Active</span>
</div>
<div class="a" style="left:0;top:0;width:157px;height:83px;background:#fff;z-index:6"></div>

</body></html>
